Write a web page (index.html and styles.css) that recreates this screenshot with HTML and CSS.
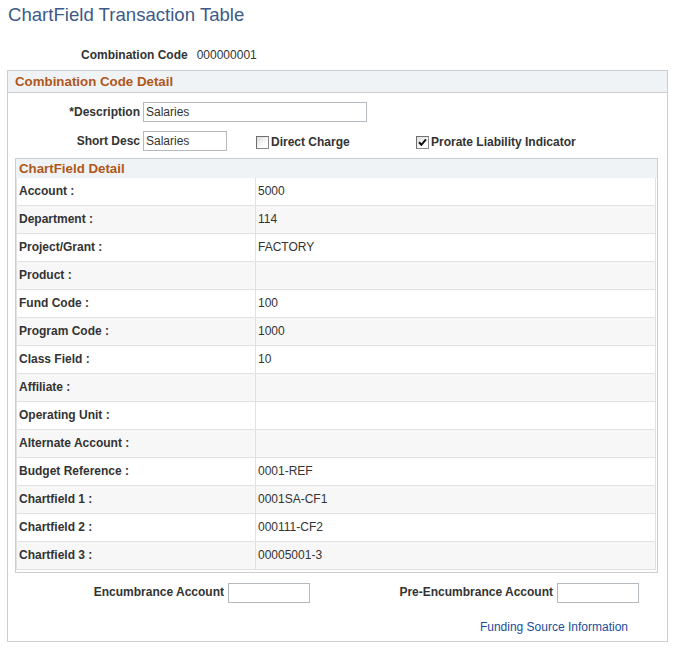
FILE: index.html
```html
<!DOCTYPE html>
<html lang="en">
<head>
    <meta charset="UTF-8">
    <title>ChartField Transaction Table</title>
    <link rel="stylesheet" href="styles.css">
</head>
<body>
    <h1 class="page-title">ChartField Transaction Table</h1>

    <div class="combo-code">
        <span class="label">Combination Code</span>
        <span class="value">000000001</span>
    </div>

    <div class="panel">
        <div class="panel-header">Combination Code Detail</div>

        <div class="form-grid">
            <label class="label" for="descr">*Description</label>
            <input type="text" id="descr" class="field field-long" value="Salaries">

            <label class="label" for="short-descr">Short Desc</label>
            <div class="inline-row">
                <input type="text" id="short-descr" class="field field-short" value="Salaries">
                <span class="check check-direct">
                    <span class="box"></span>
                    <span class="label">Direct Charge</span>
                </span>
                <span class="check">
                    <span class="box checked">
                        <svg width="9" height="9" viewBox="0 0 9 9"><path d="M1 4.2 L3.4 6.8 L8 1.4" fill="none" stroke="#111" stroke-width="2"/></svg>
                    </span>
                    <span class="label">Prorate Liability Indicator</span>
                </span>
            </div>
        </div>

        <div class="cf-box">
            <div class="cf-header">ChartField Detail</div>
            <div class="cf-rows">
                <div class="cf-row"><div class="cf-label">Account :</div><div class="cf-value">5000</div></div>
                <div class="cf-row"><div class="cf-label">Department :</div><div class="cf-value">114</div></div>
                <div class="cf-row"><div class="cf-label">Project/Grant :</div><div class="cf-value">FACTORY</div></div>
                <div class="cf-row"><div class="cf-label">Product :</div><div class="cf-value"></div></div>
                <div class="cf-row"><div class="cf-label">Fund Code :</div><div class="cf-value">100</div></div>
                <div class="cf-row"><div class="cf-label">Program Code :</div><div class="cf-value">1000</div></div>
                <div class="cf-row"><div class="cf-label">Class Field :</div><div class="cf-value">10</div></div>
                <div class="cf-row"><div class="cf-label">Affiliate :</div><div class="cf-value"></div></div>
                <div class="cf-row"><div class="cf-label">Operating Unit :</div><div class="cf-value"></div></div>
                <div class="cf-row"><div class="cf-label">Alternate Account :</div><div class="cf-value"></div></div>
                <div class="cf-row"><div class="cf-label">Budget Reference :</div><div class="cf-value">0001-REF</div></div>
                <div class="cf-row"><div class="cf-label">Chartfield 1 :</div><div class="cf-value">0001SA-CF1</div></div>
                <div class="cf-row"><div class="cf-label">Chartfield 2 :</div><div class="cf-value">000111-CF2</div></div>
                <div class="cf-row"><div class="cf-label">Chartfield 3 :</div><div class="cf-value">00005001-3</div></div>
            </div>
        </div>

        <div class="enc-grid">
            <label class="label" for="enc">Encumbrance Account</label>
            <input type="text" id="enc" class="field">
            <label class="label" for="pre-enc">Pre-Encumbrance Account</label>
            <input type="text" id="pre-enc" class="field">
        </div>

        <div class="links">
            <a href="#" class="link">Funding Source Information</a>
        </div>
    </div>
</body>
</html>
```

FILE: styles.css
```css
body {
    margin: 0;
    font-family: "Liberation Sans", Arial, sans-serif;
    font-size: 12px;
    color: #333;
    background: #fff;
}
.page-title {
    margin: 0;
    padding: 4px 8px 0 8px;
    font-size: 18.6px;
    line-height: 22px;
    font-weight: normal;
    color: #3d5a8a;
}
.label {
    font-weight: bold;
    color: #333;
}
.combo-code {
    margin-top: 22px;
    padding-left: 81px;
    line-height: 14px;
    display: flex;
    gap: 9px;
}
.combo-code .value {
    color: #333;
}
.panel {
    margin: 8px 6px 0 7px;
    border: 1px solid #c9ced2;
    padding-bottom: 7px;
}
.panel-header {
    height: 21px;
    line-height: 21px;
    padding-left: 7px;
    background: #eff3f5;
    border-bottom: 1px solid #c9ced2;
    color: #b0571b;
    font-weight: bold;
    font-size: 13.3px;
}
.form-grid {
    display: grid;
    grid-template-columns: 132px auto;
    column-gap: 3px;
    row-gap: 9px;
    padding-top: 9px;
    align-items: center;
}
.form-grid > .label {
    text-align: right;
}
.field {
    box-sizing: border-box;
    height: 20px;
    width: 82px;
    border: 1px solid #b4b9be;
    padding: 0 2px;
    font-family: "Liberation Sans", Arial, sans-serif;
    font-size: 12px;
    color: #333;
    margin: 0;
}
.field-long {
    width: 224px;
}
.field-short {
    width: 84px;
}
.inline-row {
    display: flex;
    align-items: center;
}
.check {
    display: flex;
    align-items: center;
    gap: 2px;
    padding-top: 2px;
}
.check-direct {
    margin-left: 29px;
    width: 160px;
}
.box {
    box-sizing: border-box;
    width: 13px;
    height: 13px;
    border: 1px solid #8a8a8a;
    border-top-color: #6e6e6e;
    border-left-color: #6e6e6e;
    background: linear-gradient(135deg, #dcdcdc 0%, #ffffff 70%);
    display: flex;
    align-items: center;
    justify-content: center;
}
.cf-box {
    margin: 7px 9px 0 7px;
    border: 1px solid #c9ced2;
    padding: 0 1px 2px 0;
}
.cf-header {
    height: 19px;
    line-height: 19px;
    padding-left: 3px;
    background: #eff3f5;
    color: #b0571b;
    font-weight: bold;
    font-size: 13.3px;
    margin-right: -1px;
}
.cf-row {
    display: grid;
    grid-template-columns: 239px auto;
    height: 28px;
    box-sizing: border-box;
    border-bottom: 1px solid #e1e1e1;
    border-right: 1px solid #e1e1e1;
    border-left: 1px solid #e1e1e1;
}
.cf-row:nth-child(even) {
    background: #f7f7f7;
}
.cf-label {
    font-weight: bold;
    line-height: 27px;
    padding-left: 2px;
    border-right: 1px solid #e1e1e1;
}
.cf-value {
    line-height: 27px;
    padding-left: 2px;
}
.enc-grid {
    display: grid;
    grid-template-columns: 216px 82px 239px 82px;
    column-gap: 4px;
    align-items: center;
    margin-top: 10px;
}
.enc-grid > .label {
    text-align: right;
    padding-bottom: 3px;
}
.links {
    margin-top: 17px;
    line-height: 14px;
    text-align: right;
    padding-right: 39px;
}
.link {
    color: #1b4e9b;
    text-decoration: none;
}
```
